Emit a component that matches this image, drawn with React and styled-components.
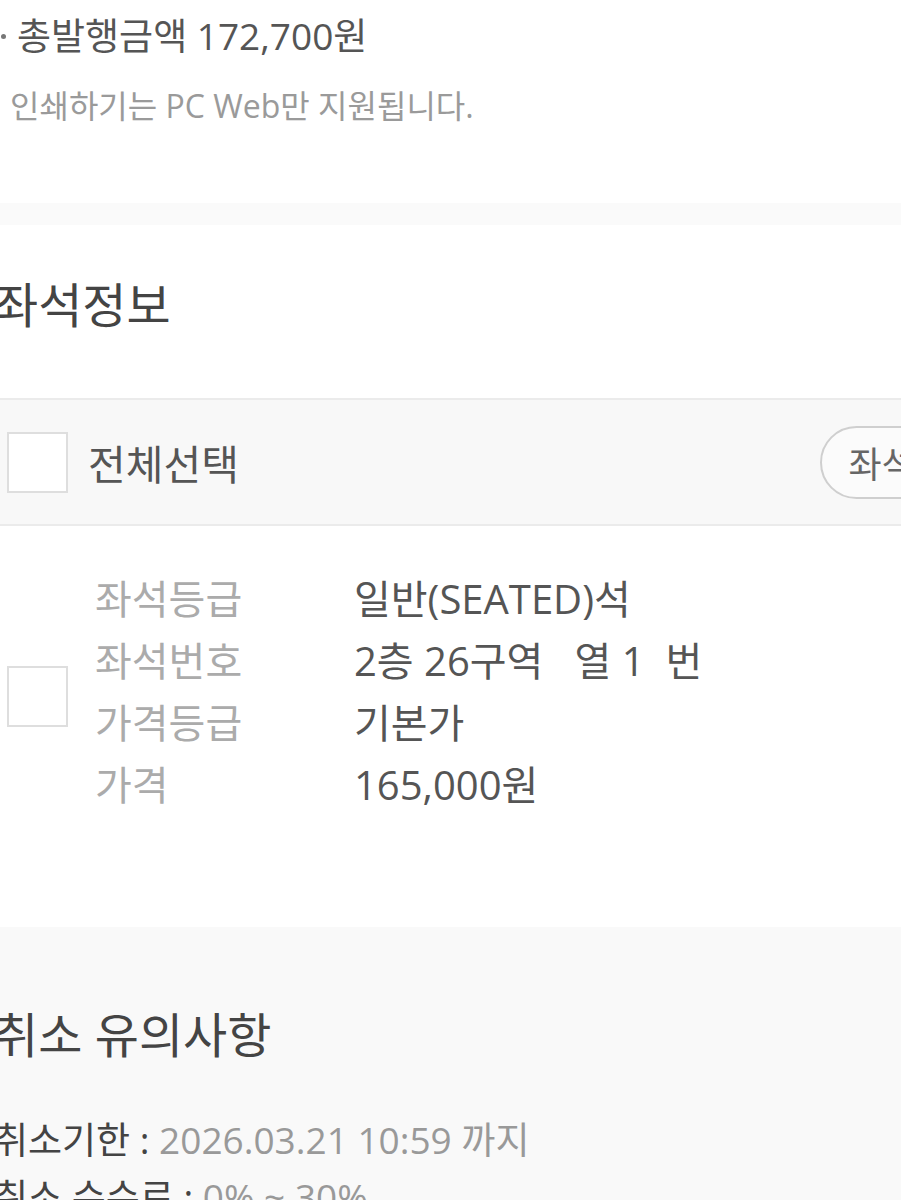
import React from 'react';
import styled, { createGlobalStyle } from 'styled-components';

const GlobalStyle = createGlobalStyle`
  html, body {
    margin: 0;
    padding: 0;
    background: #ffffff;
  }
  body {
    font-family: "Open Sans", "Noto Sans CJK KR", sans-serif;
    -webkit-font-smoothing: antialiased;
  }
`;

const Page = styled.div`
  width: 901px;
  height: 1200px;
  overflow: hidden;
  background: #fff;
`;

// summary block at the top
const Summary = styled.div`
  padding: 14px 0 0 0;
  height: 203px;
  box-sizing: border-box;
`;

const TotalLine = styled.div`
  display: flex;
  align-items: center;
  gap: 6px;
  font-size: 37px;
  line-height: 44px;
  color: #555;
  white-space: nowrap;
`;

const Bullet = styled.span`
  width: 5px;
  height: 5px;
  border-radius: 50%;
  background: #777;
  margin-left: 1px;
  margin-right: 5px;
`;

const Note = styled.div`
  margin: 26px 0 0 10px;
  font-size: 32px;
  line-height: 44px;
  color: #9a9a9a;
  white-space: nowrap;
`;

const Divider = styled.div`
  height: 22px;
  background: #fafafa;
`;

const SectionTitle = styled.h2`
  margin: 0 0 0 -6px;
  font-size: 48px;
  line-height: 60px;
  font-weight: 400;
  color: #444;
  white-space: nowrap;
  padding: ${p => p.pad};
`;

const SelectBar = styled.div`
  display: flex;
  align-items: center;
  height: 124px;
  background: #f8f8f8;
  border-top: 2px solid #ebebeb;
  border-bottom: 2px solid #ebebeb;
  padding-left: 7px;
`;

const Checkbox = styled.span`
  flex: none;
  width: 57px;
  height: 57px;
  border: 2px solid #dedede;
  background: #fff;
`;

const SelectLabel = styled.span`
  margin-left: 20px;
  font-size: 41px;
  color: #555;
  white-space: nowrap;
`;

const PillButton = styled.span`
  margin-left: auto;
  margin-right: -145px;
  height: 69px;
  display: flex;
  align-items: center;
  padding: 0 30px 0 26px;
  border: 2px solid #cfcfcf;
  border-radius: 40px;
  background: #fbfbfb;
  font-size: 36px;
  color: #666;
  white-space: nowrap;
`;

const SeatRow = styled.div`
  display: flex;
  align-items: flex-start;
  padding: 40px 0 0 7px;
  height: 401px;
  box-sizing: border-box;
`;

const SeatCheck = styled(Checkbox)`
  margin-top: 100px;
`;

const InfoGrid = styled.div`
  margin-left: 27px;
  display: grid;
  grid-template-columns: 259px auto;
  grid-auto-rows: 62px;
  align-items: center;
`;

const InfoLabel = styled.span`
  font-size: 40px;
  color: #ababab;
  white-space: nowrap;
`;

const InfoValue = styled.span`
  font-size: 40px;
  color: #555;
  white-space: pre;
`;

const Notice = styled.div`
  background: #f9f9f9;
  padding-top: 78px;
  min-height: 300px;
`;

const NoticeList = styled.div`
  margin: 46px 0 0 -6px;
`;

const NoticeLine = styled.div`
  font-size: 37px;
  line-height: 57px;
  color: #444;
  white-space: nowrap;
`;

const NoticeValue = styled.span`
  color: #999;
`;

const seatInfo = [
  ['좌석등급', '일반(SEATED)석'],
  ['좌석번호', '2층 26구역   열 1  번'],
  ['가격등급', '기본가'],
  ['가격', '165,000원'],
];

const notices = [
  ['취소기한 : ', '2026.03.21 10:59 까지'],
  ['취소 수수료 : ', '0% ~ 30%'],
];

export default function App() {
  return (
    <Page>
      <GlobalStyle />
      <Summary>
        <TotalLine>
          <Bullet />
          총발행금액 172,700원
        </TotalLine>
        <Note>인쇄하기는 PC Web만 지원됩니다.</Note>
      </Summary>
      <Divider />
      <SectionTitle pad="50px 0 63px 0">좌석정보</SectionTitle>
      <SelectBar>
        <Checkbox />
        <SelectLabel>전체선택</SelectLabel>
        <PillButton>좌석배치도</PillButton>
      </SelectBar>
      <SeatRow>
        <SeatCheck />
        <InfoGrid>
          {seatInfo.map(([label, value]) => (
            <React.Fragment key={label}>
              <InfoLabel>{label}</InfoLabel>
              <InfoValue>{value}</InfoValue>
            </React.Fragment>
          ))}
        </InfoGrid>
      </SeatRow>
      <Notice>
        <SectionTitle pad="0">취소 유의사항</SectionTitle>
        <NoticeList>
          {notices.map(([label, value]) => (
            <NoticeLine key={label}>
              {label}
              <NoticeValue>{value}</NoticeValue>
            </NoticeLine>
          ))}
        </NoticeList>
      </Notice>
    </Page>
  );
}
